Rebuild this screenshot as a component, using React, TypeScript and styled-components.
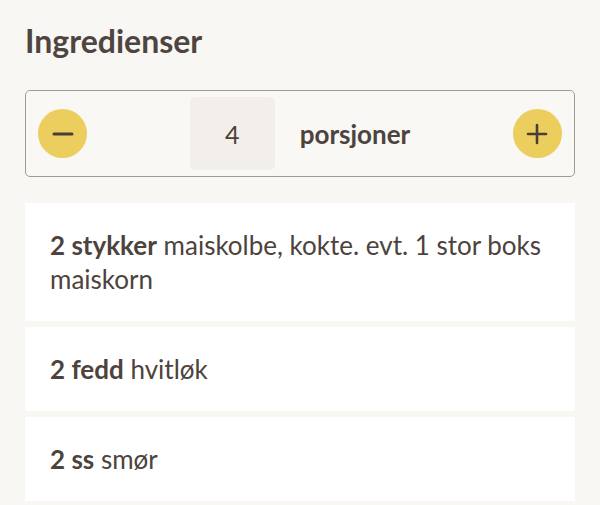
import React from "react";
import styled, { createGlobalStyle } from "styled-components";

const Global = createGlobalStyle`
  html, body { margin: 0; padding: 0; background: #f9f7f4; }
  body { font-family: "Lato", "Noto Sans", sans-serif; color: #4a403a; }
`;

const Page = styled.div`
  padding: 22px 25px 0 25px;
  display: flex;
  flex-direction: column;
`;

const Title = styled.h2`
  margin: 0 0 30px 0;
  font-size: 32px;
  line-height: 38px;
  font-weight: 700;
  color: #4f4540;
`;

const Stepper = styled.div`
  height: 87px;
  box-sizing: border-box;
  border: 1.5px solid #a09a94;
  border-radius: 5px;
  background: #faf8f5;
  display: flex;
  align-items: center;
  justify-content: space-between;
  padding: 0 12px;
  margin-bottom: 26px;
`;

const RoundButton = styled.button`
  flex: none;
  width: 49px;
  height: 49px;
  border-radius: 50%;
  border: none;
  background: #ecce5e;
  display: flex;
  align-items: center;
  justify-content: center;
  padding: 0;
  color: #4a3f35;
`;

const Center = styled.div`
  display: flex;
  align-items: center;
  gap: 25px;
`;

const Count = styled.div`
  width: 85px;
  height: 73px;
  background: #f2efeb;
  border-radius: 5px;
  display: flex;
  align-items: center;
  justify-content: center;
  font-size: 25px;
  color: #4a403a;
`;

const Unit = styled.span`
  font-size: 26px;
  font-weight: 700;
  color: #4d433d;
`;

const List = styled.ul`
  list-style: none;
  margin: 0;
  padding: 0;
  display: flex;
  flex-direction: column;
  gap: 6px;
`;

const Item = styled.li`
  background: #ffffff;
  padding: 25px 25px 25px 25px;
  font-size: 26px;
  line-height: 34px;
  color: #4d433d;
`;

const Amount = styled.strong`
  font-weight: 700;
`;

const Minus = () => (
  <svg width="22" height="22" viewBox="0 0 22 22">
    <path d="M2 11h18" stroke="currentColor" strokeWidth="3" strokeLinecap="round" />
  </svg>
);

const Plus = () => (
  <svg width="22" height="22" viewBox="0 0 22 22">
    <path d="M2 11h18M11 2v18" stroke="currentColor" strokeWidth="2.6" strokeLinecap="round" />
  </svg>
);

const items = [
  { amount: "2 stykker", name: "maiskolbe, kokte. evt. 1 stor boks maiskorn" },
  { amount: "2 fedd", name: "hvitløk" },
  { amount: "2 ss", name: "smør" },
];

export default function App() {
  return (
    <>
      <Global />
      <Page>
        <Title>Ingredienser</Title>
        <Stepper>
          <RoundButton aria-label="Færre porsjoner">
            <Minus />
          </RoundButton>
          <Center>
            <Count>4</Count>
            <Unit>porsjoner</Unit>
          </Center>
          <RoundButton aria-label="Flere porsjoner">
            <Plus />
          </RoundButton>
        </Stepper>
        <List>
          {items.map((it) => (
            <Item key={it.amount}>
              <Amount>{it.amount}</Amount> {it.name}
            </Item>
          ))}
        </List>
      </Page>
    </>
  );
}
